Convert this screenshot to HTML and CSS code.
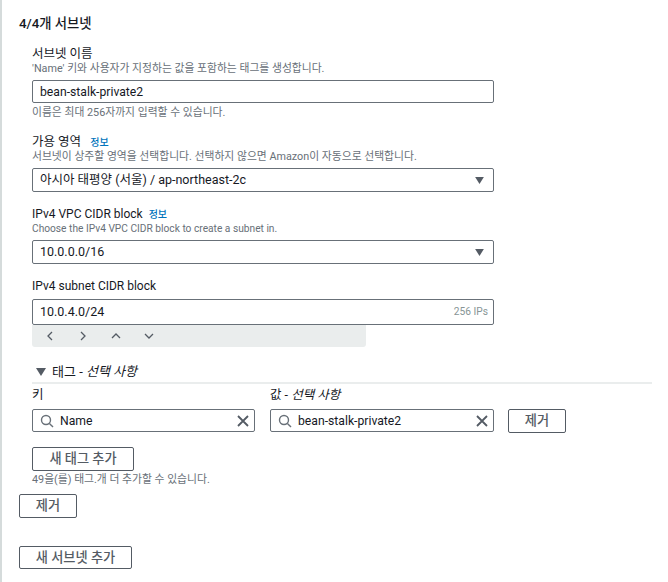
FILE: index.html
```html
<!DOCTYPE html>
<html lang="ko">
<head>
    <meta charset="UTF-8">
    <meta name="viewport" content="width=device-width, initial-scale=1.0">
    <title>서브넷 설정</title>
    <link rel="stylesheet" href="styles.css">
</head>
<body>
    <div class="panel">
        <h2 class="panel-title">4/4개 서브넷</h2>

        <div class="subnet-fields">
            <div class="field field-name">
                <div class="label">서브넷 이름</div>
                <div class="desc">'Name' 키와 사용자가 지정하는 값을 포함하는 태그를 생성합니다.</div>
                <div class="box box-input">bean-stalk-private2</div>
                <div class="desc hint">이름은 최대 256자까지 입력할 수 있습니다.</div>
            </div>

            <div class="field">
                <div class="label">가용 영역 <a class="info" href="#">정보</a></div>
                <div class="desc">서브넷이 상주할 영역을 선택합니다. 선택하지 않으면 Amazon이 자동으로 선택합니다.</div>
                <div class="box box-select">
                    <span>아시아 태평양 (서울) / ap-northeast-2c</span>
                    <svg class="caret" width="9" height="7" viewBox="0 0 10 8"><path d="M0 0h10L5 8z"/></svg>
                </div>
            </div>

            <div class="field">
                <div class="label label-en">IPv4 VPC CIDR block <a class="info" href="#">정보</a></div>
                <div class="desc desc-en">Choose the IPv4 VPC CIDR block to create a subnet in.</div>
                <div class="box box-select">
                    <span>10.0.0.0/16</span>
                    <svg class="caret" width="9" height="7" viewBox="0 0 10 8"><path d="M0 0h10L5 8z"/></svg>
                </div>
            </div>

            <div class="field">
                <div class="label label-en">IPv4 subnet CIDR block</div>
                <div class="box box-cidr">
                    <span>10.0.4.0/24</span>
                    <span class="ips">256 IPs</span>
                </div>
                <div class="stepper">
                    <svg width="10" height="10" viewBox="0 0 10 10"><path d="M7 1L3 5l4 4"/></svg>
                    <svg width="10" height="10" viewBox="0 0 10 10"><path d="M3 1l4 4-4 4"/></svg>
                    <svg width="10" height="10" viewBox="0 0 10 10"><path d="M1 7l4-4 4 4"/></svg>
                    <svg width="10" height="10" viewBox="0 0 10 10"><path d="M1 3l4 4 4-4"/></svg>
                </div>
            </div>

            <div class="tags">
                <div class="tags-head">
                    <svg class="caret" width="10" height="8" viewBox="0 0 10 8"><path d="M0 0h10L5 8z"/></svg>
                    <span>태그 - <i>선택 사항</i></span>
                </div>
                <div class="tag-grid">
                    <div class="tag-label">키</div>
                    <div class="tag-label">값 - <i>선택 사항</i></div>
                    <div></div>
                    <div class="box box-search">
                        <svg class="search" width="14" height="14" viewBox="0 0 14 14"><circle cx="6" cy="6" r="4.5"/><path d="M9.4 9.4L13 13"/></svg>
                        <span class="search-text">Name</span>
                        <svg class="clear" width="12" height="12" viewBox="0 0 12 12"><path d="M1 1l10 10M11 1L1 11"/></svg>
                    </div>
                    <div class="box box-search">
                        <svg class="search" width="14" height="14" viewBox="0 0 14 14"><circle cx="6" cy="6" r="4.5"/><path d="M9.4 9.4L13 13"/></svg>
                        <span class="search-text">bean-stalk-private2</span>
                        <svg class="clear" width="12" height="12" viewBox="0 0 12 12"><path d="M1 1l10 10M11 1L1 11"/></svg>
                    </div>
                    <button class="btn btn-remove-tag">제거</button>
                </div>
                <button class="btn btn-add-tag">새 태그 추가</button>
                <div class="desc tag-limit">49을(를) 태그.개 더 추가할 수 있습니다.</div>
            </div>
        </div>

        <button class="btn btn-remove">제거</button>
        <button class="btn btn-add-subnet">새 서브넷 추가</button>
    </div>
</body>
</html>
```

FILE: styles.css
```css
* {
    box-sizing: border-box;
}

body {
    margin: 0;
    height: 582px;
    overflow: hidden;
    background: #fff;
    color: #16191f;
    font-family: Roboto, "Noto Sans CJK KR", sans-serif;
    font-size: 12.5px;
    line-height: 16px;
}

.panel {
    height: 582px;
    padding: 16px 0 0 17px;
    border-left: 2px solid #d5dbdb;
}

.panel-title {
    margin: 0;
    font-size: 13.3px;
    line-height: 16px;
    font-weight: 500;
}

.subnet-fields {
    margin-left: 13px;
}

.field {
    margin-top: 14px;
}

.label {
    color: #16191f;
    font-size: 12.5px;
    line-height: 16px;
}

.label-en {
    font-size: 12px;
}

.info {
    margin-left: 6px;
    color: #0073bb;
    font-size: 10px;
    line-height: 1;
    font-weight: 500;
    text-decoration: none;
}

.label-en .info {
    margin-left: 3px;
}

.desc {
    color: #687078;
    font-size: 10.8px;
    line-height: 14px;
}

.desc-en {
    font-size: 10.2px;
}

.hint {
    margin-top: 3px;
}

.box {
    display: flex;
    align-items: center;
    width: 462px;
    background: #fff;
    border: 1px solid #687078;
    border-radius: 2px;
    color: #16191f;
}

.field .desc + .box {
    margin-top: 4px;
}

.box-input {
    height: 23px;
    padding: 0 7px;
    font-size: 12.2px;
}

.box-select {
    height: 24px;
    padding: 0 9px 0 7px;
    justify-content: space-between;
}

.caret {
    fill: #545b64;
}

.box-cidr {
    height: 26px;
    margin-top: 5px;
    padding: 0 5px 0 7px;
    justify-content: space-between;
}

.ips {
    color: #879596;
    font-size: 10.2px;
}

.stepper {
    display: flex;
    align-items: center;
    gap: 23px;
    width: 334px;
    height: 22px;
    padding-left: 13px;
    background: #eaeded;
    border-radius: 0 0 3px 3px;
}

.stepper svg {
    fill: none;
    stroke: #545b64;
    stroke-width: 1.3;
}

.tags-head {
    display: flex;
    align-items: center;
    gap: 6px;
    width: 620px;
    height: 37px;
    padding: 14px 0 0 4px;
    border-bottom: 2px solid #eaeded;
    font-size: 13px;
}

.tag-grid {
    display: grid;
    grid-template-columns: 223px 224px 57px;
    column-gap: 15px;
    row-gap: 6px;
}

.tag-grid .box {
    width: auto;
    height: 23px;
    padding: 0 5px 0 7px;
}

.tag-label {
    height: 19px;
    padding-top: 3px;
    color: #16191f;
    font-size: 12.5px;
}

.search {
    flex: none;
    fill: none;
    stroke: #687078;
    stroke-width: 1.4;
}

.search-text {
    flex: 1;
    margin-left: 6px;
    font-size: 12.2px;
}

.clear {
    flex: none;
    fill: none;
    stroke: #545b64;
    stroke-width: 1.8;
}

.btn {
    display: block;
    height: 24px;
    padding: 0 0 3px;
    background: #fff;
    border: 1px solid #545b64;
    border-radius: 2px;
    color: #545b64;
    font-family: inherit;
    font-size: 13.2px;
    font-weight: 500;
}

.btn-remove-tag {
    margin-left: -1px;
}

.btn-add-tag {
    width: 102px;
    margin-top: 14px;
}

.tag-limit {
    margin-top: 2px;
}

.btn-remove {
    width: 58px;
    margin-top: 7px;
}

.btn-add-subnet {
    width: 113px;
    height: 23px;
    margin-top: 28px;
}
```
